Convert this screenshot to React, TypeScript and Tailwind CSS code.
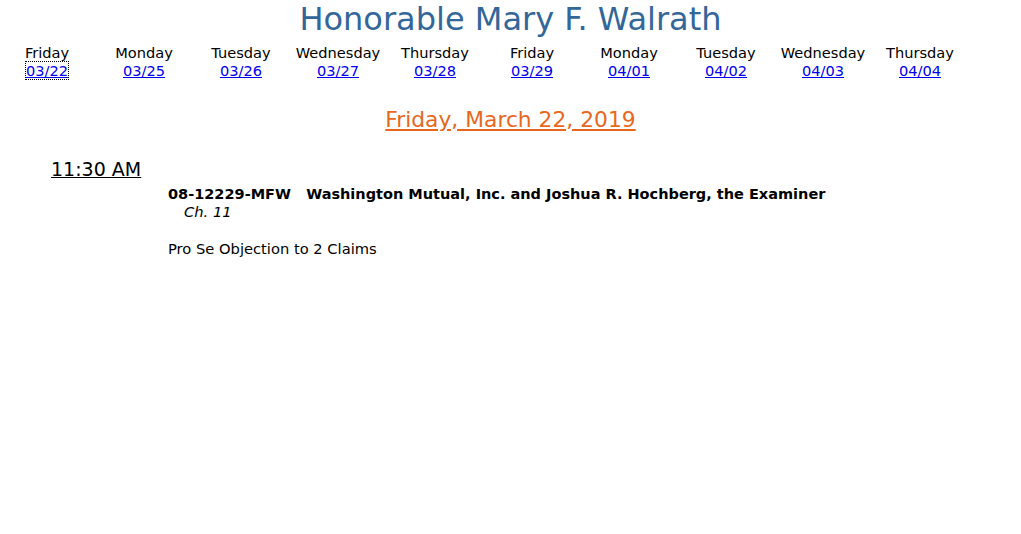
const days = [
  { name: "Friday", date: "03/22" },
  { name: "Monday", date: "03/25" },
  { name: "Tuesday", date: "03/26" },
  { name: "Wednesday", date: "03/27" },
  { name: "Thursday", date: "03/28" },
  { name: "Friday", date: "03/29" },
  { name: "Monday", date: "04/01" },
  { name: "Tuesday", date: "04/02" },
  { name: "Wednesday", date: "04/03" },
  { name: "Thursday", date: "04/04" },
];

export default function App() {
  return (
    <div className="min-h-[534px] bg-white text-black font-['DejaVu_Sans',sans-serif]">
      <h1 className="text-center text-[32px] leading-[38px] text-[#336699] font-normal">
        Honorable Mary F. Walrath
      </h1>

      <div className="flex ml-[-1.5px] mt-[6px]">
        {days.map((d, i) => (
          <div key={i} className="w-[97px] text-center text-[14.6px] leading-[18px]">
            <div>{d.name}</div>
            <a
              href="#"
              className={`text-[#0000ee] underline ${i === 0 ? "outline-1 outline-dotted outline-black" : ""}`}
            >
              {d.date}
            </a>
          </div>
        ))}
      </div>

      <div className="text-center mt-[27px]">
        <a href="#" className="text-[21.8px] leading-[26px] text-[#e8671e] underline">
          Friday, March 22, 2019
        </a>
      </div>

      <div className="pl-[51px] mt-[24px] text-[19px] leading-[22px] underline">11:30 AM</div>

      <div className="pl-[168px] mt-[6px] text-[14.7px] leading-[17px]">
        <div className="font-bold whitespace-pre text-[14.5px]">
          08-12229-MFW{"   "}Washington Mutual, Inc. and Joshua R. Hochberg, the Examiner
        </div>
        <div className="italic pl-[16px]">Ch. 11</div>
        <div className="mt-[20px]">Pro Se Objection to 2 Claims</div>
      </div>
    </div>
  );
}
